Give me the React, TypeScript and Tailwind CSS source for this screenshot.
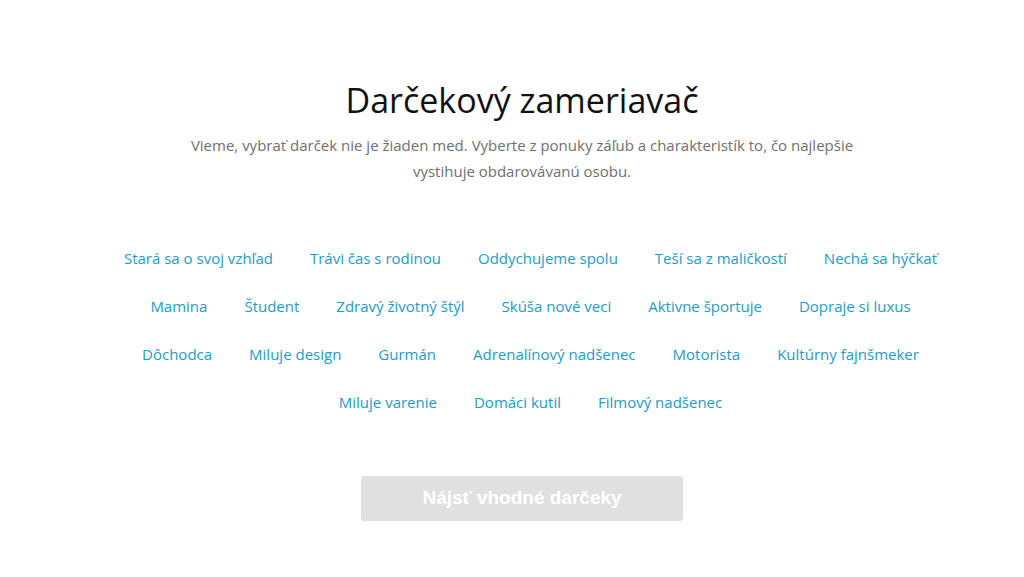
import React from "react";

const tagRows = [
  ["Stará sa o svoj vzhľad", "Trávi čas s rodinou", "Oddychujeme spolu", "Teší sa z maličkostí", "Nechá sa hýčkať"],
  ["Mamina", "Študent", "Zdravý životný štýl", "Skúša nové veci", "Aktivne športuje", "Dopraje si luxus"],
  ["Dôchodca", "Miluje design", "Gurmán", "Adrenalínový nadšenec", "Motorista", "Kultúrny fajnšmeker"],
  ["Miluje varenie", "Domáci kutil", "Filmový nadšenec"],
];

const App = () => {
  return (
    <div className="min-h-[577px] bg-white font-['Open_Sans',sans-serif] flex flex-col items-center pt-[76px]">
      <h1 className="pl-[20px] text-[34px] leading-[48px] text-[#111]">Darčekový zameriavač</h1>
      <p className="mt-[8px] pl-[20px] w-[730px] text-center text-[15px] leading-[26px] text-[#707070]">
        Vieme, vybrať darček nie je žiaden med. Vyberte z ponuky záľub a charakteristík to, čo najlepšie
        vystihuje obdarovávanú osobu.
      </p>
      <div className="mt-[50px] flex flex-col items-center">
        {tagRows.map((row, i) => (
          <div key={i} className="flex h-[48px] items-center">
            {row.map((tag) => (
              <a key={tag} href="#" className="pl-[37px] text-[15px] text-[#1c9ccb]">
                {tag}
              </a>
            ))}
          </div>
        ))}
      </div>
      <button className="mt-[50px] ml-[20px] w-[322px] h-[45px] rounded-[3px] bg-[#e0e0e0] text-white font-bold text-[19px] font-['Liberation_Sans',sans-serif]">
        Nájsť vhodné darčeky
      </button>
    </div>
  );
};

export default App;
